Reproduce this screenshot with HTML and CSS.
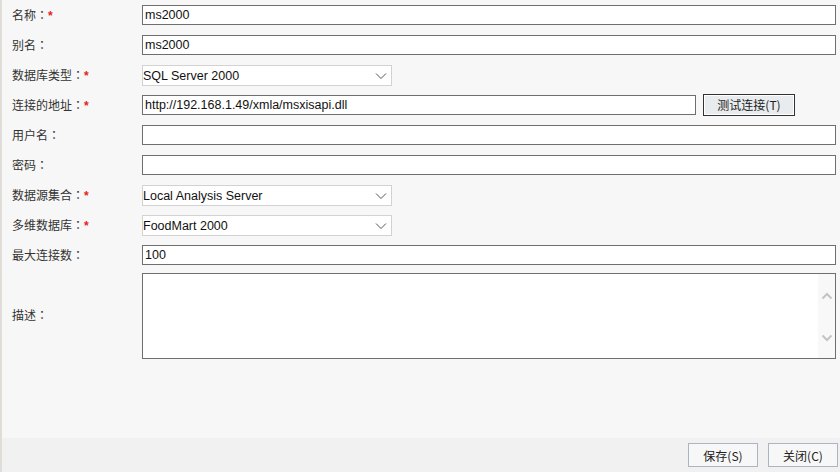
FILE: index.html
```html
<!DOCTYPE html>
<html>
<head>
<meta charset="utf-8">
<link rel="stylesheet" href="styles.css">
</head>
<body>
<div class="page">
  <div class="form">
    <div class="row"><label class="lbl">名称<span class="colon">：</span><span class="req">*</span></label><div class="ctl"><div class="input">ms2000</div></div></div>
    <div class="row"><label class="lbl">别名<span class="colon">：</span></label><div class="ctl"><div class="input">ms2000</div></div></div>
    <div class="row"><label class="lbl">数据库类型<span class="colon">：</span><span class="req">*</span></label><div class="ctl"><div class="select"><span>SQL Server 2000</span><svg class="chev" width="12" height="8" viewBox="0 0 12 8"><path d="M1 1.5 L6 6.5 L11 1.5" fill="none" stroke="#555" stroke-width="1"/></svg></div></div></div>
    <div class="row"><label class="lbl">连接的地址<span class="colon">：</span><span class="req">*</span></label><div class="ctl url"><div class="input url-input">http://192.168.1.49/xmla/msxisapi.dll</div><button class="test">测试连接(T)</button></div></div>
    <div class="row"><label class="lbl">用户名<span class="colon">：</span></label><div class="ctl"><div class="input"></div></div></div>
    <div class="row"><label class="lbl">密码<span class="colon">：</span></label><div class="ctl"><div class="input"></div></div></div>
    <div class="row"><label class="lbl">数据源集合<span class="colon">：</span><span class="req">*</span></label><div class="ctl"><div class="select"><span>Local Analysis Server</span><svg class="chev" width="12" height="8" viewBox="0 0 12 8"><path d="M1 1.5 L6 6.5 L11 1.5" fill="none" stroke="#555" stroke-width="1"/></svg></div></div></div>
    <div class="row"><label class="lbl">多维数据库<span class="colon">：</span><span class="req">*</span></label><div class="ctl"><div class="select"><span>FoodMart 2000</span><svg class="chev" width="12" height="8" viewBox="0 0 12 8"><path d="M1 1.5 L6 6.5 L11 1.5" fill="none" stroke="#555" stroke-width="1"/></svg></div></div></div>
    <div class="row"><label class="lbl">最大连接数<span class="colon">：</span></label><div class="ctl"><div class="input">100</div></div></div>
    <div class="row area-row"><label class="lbl">描述<span class="colon">：</span></label><div class="ctl"><div class="textarea"><div class="ta-body"></div><div class="ta-scroll"><svg width="12" height="8" viewBox="0 0 12 8"><path d="M1.5 6.5 L6 2 L10.5 6.5" fill="none" stroke="#c4c4c4" stroke-width="2"/></svg><svg width="12" height="8" viewBox="0 0 12 8"><path d="M1.5 1.5 L6 6 L10.5 1.5" fill="none" stroke="#c4c4c4" stroke-width="2"/></svg></div></div></div></div>
  </div>
  <div class="footer">
    <button class="fbtn">保存(S)</button>
    <button class="fbtn">关闭(C)</button>
  </div>
</div>
</body>
</html>
```
FILE: styles.css
```css
html, body {
  margin: 0;
  padding: 0;
}
body {
  width: 840px;
  height: 472px;
  overflow: hidden;
  background: #f7f7f7;
  font-family: "Liberation Sans", "Noto Sans CJK SC", sans-serif;
  font-size: 12px;
  color: #222;
}
.page {
  height: 472px;
  border-left: 2px solid #e0dcd8;
  display: flex;
  flex-direction: column;
  box-sizing: border-box;
}
.form {
  flex: 1;
  padding-right: 4px;
}
.row {
  display: grid;
  grid-template-columns: 140px 1fr;
  height: 30px;
  align-items: start;
}
.lbl {
  padding-left: 10px;
  padding-top: 5px;
  height: 20px;
  line-height: 20px;
  font-family: "Noto Sans CJK SC", "Liberation Sans", sans-serif;
  font-size: 12px;
  color: #333;
  white-space: nowrap;
}
.colon {
  font-family: "Noto Sans CJK TC", "Noto Sans CJK SC", sans-serif;
}
.req {
  color: #e4221b;
  font-family: "Liberation Sans", sans-serif;
  font-weight: bold;
}
.ctl {
  padding-top: 5px;
  display: flex;
  align-items: flex-start;
}
.input {
  flex: 1;
  height: 20px;
  box-sizing: border-box;
  border: 1px solid #6e6e6e;
  background: #fff;
  line-height: 18px;
  padding-left: 2px;
  font-size: 12.5px;
  color: #111;
  white-space: nowrap;
  overflow: hidden;
}
.url-input {
  flex: 0 0 554px;
}
.test {
  margin-left: 7px;
  margin-top: -1px;
  width: 92px;
  height: 22px;
  box-sizing: border-box;
  border: 1px solid #333;
  box-shadow: inset 0 0 0 1px #fff;
  background: #e9ecef;
  font-family: "Noto Sans CJK SC", "Liberation Sans", sans-serif;
  font-size: 12px;
  color: #222;
  padding: 0;
  line-height: 18px;
}
.select {
  width: 250px;
  height: 21px;
  box-sizing: border-box;
  border: 1px solid #d2d2d2;
  background: #fff;
  display: flex;
  align-items: center;
  justify-content: space-between;
  padding-left: 0;
  padding-right: 4px;
  font-size: 12.5px;
  color: #111;
}
.chev {
  display: block;
}
.area-row {
  height: 90px;
}
.area-row .lbl {
  padding-top: 0;
  height: 90px;
  line-height: 90px;
}
.area-row .ctl {
  padding-top: 3px;
}
.textarea {
  flex: 1;
  height: 86px;
  box-sizing: border-box;
  border: 1px solid #6e6e6e;
  background: #fff;
  display: flex;
}
.ta-body {
  flex: 1;
}
.ta-scroll {
  width: 17px;
  background: #f8f8f8;
  display: flex;
  flex-direction: column;
  align-items: center;
  justify-content: space-between;
  padding: 18px 0 16px;
  box-sizing: border-box;
}
.footer {
  height: 34px;
  background: #f1f1f1;
  display: flex;
  justify-content: flex-end;
  align-items: flex-start;
  gap: 10px;
  padding-top: 5px;
  padding-right: 2px;
  box-sizing: border-box;
}
.fbtn {
  width: 70px;
  height: 24px;
  box-sizing: border-box;
  border: 1px solid #a9b5c3;
  background: #f7f7f7;
  font-family: "Noto Sans CJK SC", "Liberation Sans", sans-serif;
  font-size: 12px;
  color: #222;
  padding: 0;
}
```
